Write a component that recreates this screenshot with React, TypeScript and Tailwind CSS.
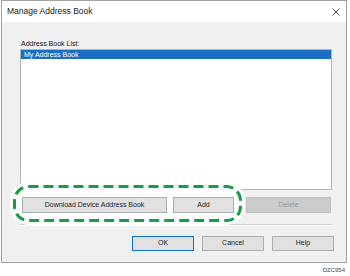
import React from "react";

const Btn = ({
  label,
  w,
  primary,
  disabled,
  h = "h-[16px]",
}: {
  label: string;
  w: string;
  primary?: boolean;
  disabled?: boolean;
  h?: string;
}) => (
  <div
    className={`${w} ${h} relative z-10 flex items-center justify-center text-[7px] border ${
      disabled
        ? "bg-[#cccccc] border-[#bfbfbf] text-[#9a9a9a]"
        : primary
        ? "bg-[#e1e1e1] border-[#0a6fd0] text-[#222]"
        : "bg-[#e1e1e1] border-[#adadad] text-[#222]"
    }`}
  >
    {label}
  </div>
);

export default function App() {
  return (
    <div className="w-[350px] h-[276px] bg-white font-['Liberation_Sans',Arial,sans-serif]">
      <div className="ml-px w-[346px] h-[263px] border border-[#a2a2a2] flex flex-col">
        {/* title bar */}
        <div className="h-[21px] bg-white flex items-center justify-between pl-[5px] pr-[6px]">
          <span className="text-[8.5px] text-[#1a1a1a]">Manage Address Book</span>
          <svg width="8" height="8" viewBox="0 0 8 8">
            <path d="M0.5 0.5 L7.5 7.5 M7.5 0.5 L0.5 7.5" stroke="#333" strokeWidth="0.9" />
          </svg>
        </div>

        {/* body */}
        <div className="flex-1 bg-[#f0f0f0] pl-[18px] pr-[14px] pt-[17px] flex flex-col">
          <div className="h-[10px] leading-[10px] text-[7px] text-[#111] pl-px">Address Book List:</div>
          <div className="h-[141px] bg-white border border-[#b4b4b4] pt-0">
            <div className="h-[9px] leading-[9px] bg-[#1a6fc2] text-white text-[7px] pl-[3px]">
              My Address Book
            </div>
          </div>

          {/* list actions */}
          <div className="relative mt-[7px] flex">
            <svg
              className="absolute left-[-11px] top-[-16px] z-0"
              width="238"
              height="46"
              viewBox="0 0 238 46"
            >
              <rect x="5.5" y="5.5" width="226" height="34" rx="14" fill="#fff" stroke="#fff" strokeWidth="9" />
              <rect
                x="5.5"
                y="5.5"
                width="226"
                height="34"
                rx="14"
                fill="#fff"
                stroke="#1a9b48"
                strokeWidth="3"
                strokeDasharray="10 5"
              />
            </svg>
            <div className="ml-[2px]">
              <Btn label="Download Device Address Book" w="w-[145px]" />
            </div>
            <div className="ml-[6px]">
              <Btn label="Add" w="w-[61px]" />
            </div>
            <div className="ml-[12px]">
              <Btn label="Delete" w="w-[85px]" disabled />
            </div>
          </div>

          <div className="mt-[11px] h-px bg-[#d0d0d0]" />
          <div className="h-px bg-white" />

          {/* dialog buttons */}
          <div className="mt-[10px] mr-[-2px] flex justify-end gap-[8px]">
            <Btn label="OK" w="w-[62px]" h="h-[15px]" primary />
            <Btn label="Cancel" w="w-[62px]" h="h-[15px]" />
            <Btn label="Help" w="w-[62px]" h="h-[15px]" />
          </div>
        </div>
      </div>
      <div className="mt-[3px] pr-[5px] text-right text-[6px] leading-[8px] text-[#444]">DZC954</div>
    </div>
  );
}
